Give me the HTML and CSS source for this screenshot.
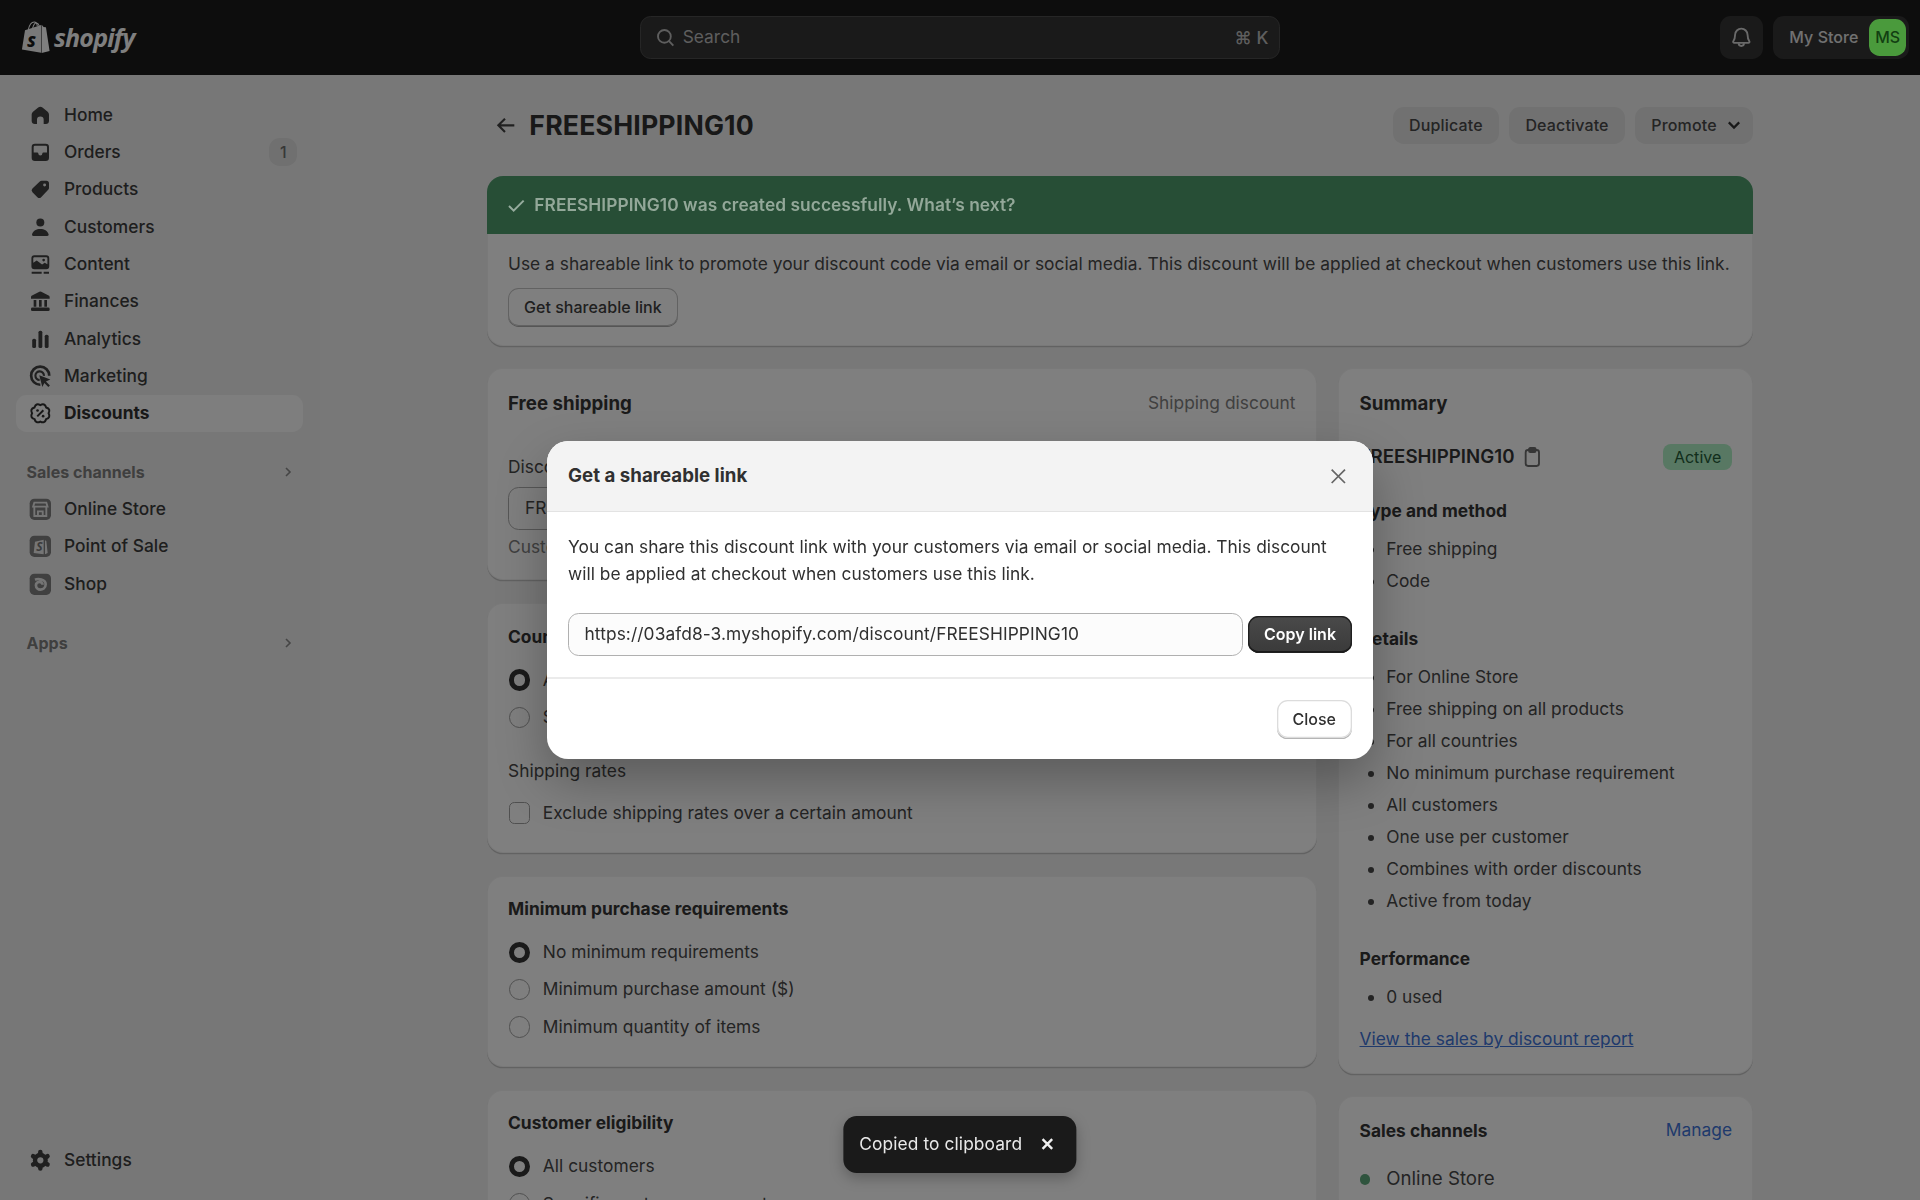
FILE: index.html
```html
<!DOCTYPE html>
<html lang="en">
<head>
<meta charset="utf-8">
<title>FREESHIPPING10 · Discounts</title>
<link rel="stylesheet" href="styles.css">
</head>
<body>
<header class="topbar">
  <div class="brand">
    <svg class="bag" viewBox="0 0 110 125" aria-hidden="true">
      <path class="bag-handle" d="M27 34C31 16 40 4 50 4c7 0 11 6 12 16M44 28C47 16 53 8 58 7c6 1 10 6 12 13"/>
      <path class="bag-left" d="M14 36 77 16v108L2 111Z"/>
      <path class="bag-right" d="M79 15c4 4 7 8 7 8l9 1c1 0 1 1 1 1l14 92-31 8Z"/>
      <text class="bag-s" x="22" y="100">S</text>
    </svg>
    <span class="wordmark">shopify</span>
  </div>
  <div class="search">
    <svg class="search-icon" viewBox="0 0 20 20"><circle cx="9.300" cy="9.300" r="4.800"/><path d="m12.800 12.800 3.200 3.400"/></svg>
    <span class="search-label">Search</span>
    <span class="search-key">⌘ K</span>
  </div>
  <div class="top-actions">
    <button class="bell"><svg viewBox="0 0 20 20"><path d="M10 3.500a4.700 4.700 0 0 0-4.700 4.700c0 2.400-.6 3.700-1.300 4.700-.4.600 0 1.300.7 1.300h10.600c.7 0 1.100-.7.7-1.300-.7-1-1.300-2.300-1.300-4.700A4.700 4.700 0 0 0 10 3.500Z"/><path d="M8 14.500a2 2 0 0 0 4 0"/></svg></button>
    <div class="store"><span>My Store</span><span class="avatar">MS</span></div>
  </div>
</header>

<div class="frame">
  <nav class="sidebar">
    <ul class="nav-list">
      <li class="nav-item"><svg class="nav-icon" viewBox="0 0 20 20"><path d="M10 3.500c-.6 0-1.100.2-1.600.6L4.500 7.400c-.7.600-1 1.400-1 2.300v4.500c0 1.300 1 2.300 2.300 2.300H7.500v-3.200a2.500 2.500 0 0 1 5 0v3.200h1.700c1.300 0 2.300-1 2.300-2.300V9.700c0-.9-.3-1.700-1-2.300l-3.900-3.300c-.5-.4-1-.6-1.600-.6Z"/></svg>Home</li>
      <li class="nav-item"><svg class="nav-icon" viewBox="0 0 20 20"><path fill-rule="evenodd" d="M3.500 6A2.500 2.500 0 0 1 6 3.500h8A2.500 2.500 0 0 1 16.500 6v8a2.500 2.500 0 0 1-2.500 2.500H6A2.500 2.500 0 0 1 3.500 14ZM5 6a1 1 0 0 1 1-1h8a1 1 0 0 1 1 1v4.200h-2.700a.8.8 0 0 0-.8.7 1.500 1.500 0 0 1-3 0 .8.8 0 0 0-.8-.7H5Z"/></svg>Orders<span class="nav-badge">1</span></li>
      <li class="nav-item"><svg class="nav-icon" viewBox="0 0 20 20"><path fill-rule="evenodd" d="M11 3.500h3.500a2 2 0 0 1 2 2V9a2 2 0 0 1-.6 1.400l-5.300 5.500a2 2 0 0 1-2.800 0l-3.700-3.700a2 2 0 0 1 0-2.800l5.500-5.300A2 2 0 0 1 11 3.500Zm2.200 2.200a1.100 1.100 0 1 0 0 2.200 1.100 1.100 0 0 0 0-2.200Z"/></svg>Products</li>
      <li class="nav-item"><svg class="nav-icon" viewBox="0 0 20 20"><circle cx="10" cy="6.300" r="3"/><path d="M3.800 15.200c.8-2.600 3.200-4 6.200-4s5.400 1.400 6.200 4c.2.700-.3 1.300-1 1.300H4.800c-.7 0-1.200-.6-1-1.300Z"/></svg>Customers</li>
      <li class="nav-item"><svg class="nav-icon" viewBox="0 0 20 20"><path fill-rule="evenodd" d="M5.500 3.200h9a2.200 2.200 0 0 1 2.200 2.200v6a2.200 2.200 0 0 1-2.200 2.200h-9a2.200 2.200 0 0 1-2.200-2.200v-6a2.200 2.200 0 0 1 2.200-2.200Zm0 1.400a.8.8 0 0 0-.8.800v3.500l2.600-1.800 4 3 2-1.200 2 1V5.400a.8.800 0 0 0-.8-.8Zm7 1.200a1 1 0 1 0 0 2 1 1 0 0 0 0-2Z"/><path d="M3.500 15.500h7.500V17H3.500ZM12.500 15.500h4V17h-4Z"/></svg>Content</li>
      <li class="nav-item"><svg class="nav-icon" viewBox="0 0 20 20"><path d="M9.300 2.800a1.500 1.500 0 0 1 1.400 0l5.500 2.900c.6.300.8.700.8 1.200V8H3V6.900c0-.5.200-.9.800-1.200Z"/><path d="M5 9h2v5H5ZM9 9h2v5H9ZM13 9h2v5h-2Z"/><rect x="3" y="14.700" width="14" height="2.600" rx="1"/></svg>Finances</li>
      <li class="nav-item"><svg class="nav-icon" viewBox="0 0 20 20"><rect x="3.900" y="9.500" width="2.900" height="7" rx="1.200"/><rect x="8.600" y="3.500" width="2.900" height="13" rx="1.200"/><rect x="13.300" y="6.500" width="2.900" height="10" rx="1.200"/></svg>Analytics</li>
      <li class="nav-item"><svg class="nav-icon" viewBox="0 0 20 20"><path class="ring" d="M10 16.300A6.800 6.800 0 1 1 16.700 9.500"/><path class="ring thin" d="M9.500 12.700a3.200 3.200 0 1 1 3.200-3"/><path d="m9.200 9.200 8.300 3.100-3.300 1.500 3 3-1.200 1.200-3-3-1.500 3.100Z"/></svg>Marketing</li>
      <li class="nav-item is-active"><svg class="nav-icon outline" viewBox="0 0 20 20"><path d="M16.200 10Q17.950 13.290 14.380 14.380 13.290 17.950 10 16.200 6.710 17.950 5.620 14.380 2.050 13.290 3.800 10 2.050 6.710 5.620 5.620 6.710 2.050 10 3.800 13.290 2.050 14.380 5.620 17.950 6.710 16.200 10Z"/><path d="m7.700 12.300 4.600-4.600"/><circle class="dot" cx="7.900" cy="7.900" r="1"/><circle class="dot" cx="12.100" cy="12.100" r="1"/></svg>Discounts</li>
    </ul>
    <div class="nav-heading">Sales channels<svg class="chev" viewBox="0 0 20 20"><path d="m8 6 4 4-4 4"/></svg></div>
    <ul class="nav-list">
      <li class="nav-item"><svg class="nav-icon" viewBox="0 0 20 20"><rect class="tile" x="2" y="2" width="16" height="16" rx="3.500"/><path class="glyph" d="M5.500 5h9l.9 3H4.600ZM5.500 8v7h9V8M8.200 15v-3.500h3.600V15"/></svg>Online Store</li>
      <li class="nav-item"><svg class="nav-icon" viewBox="0 0 20 20"><rect class="tile" x="2" y="2" width="16" height="16" rx="3.500"/><path class="glyph-fill" d="M6 6.500 12.500 5v11L5 15ZM13.500 5.500l1 .5 1 9-2 1Z"/><text class="tile-s" x="7" y="13.500">S</text></svg>Point of Sale</li>
      <li class="nav-item"><svg class="nav-icon" viewBox="0 0 20 20"><rect class="tile" x="2" y="2" width="16" height="16" rx="3.500"/><path class="swirl" d="M6 6.500C8 5.600 14 5.800 14 10c0 3-2.500 4-4 4s-3.300-1.300-3.300-3.300c0-1.600 1.300-2.500 2.700-2.500 1.300 0 2.300 1 2.300 2.200"/></svg>Shop</li>
    </ul>
    <div class="nav-heading nav-heading-apps">Apps<svg class="chev" viewBox="0 0 20 20"><path d="m8 6 4 4-4 4"/></svg></div>
    <div class="nav-foot">
      <div class="nav-item"><svg class="nav-icon gear" viewBox="0 0 20 20"><circle class="gear-ring" cx="10" cy="10" r="4"/><path class="gear-teeth" d="M10 3.800v1.500M10 14.700v1.500M4.600 6.900l1.300.8M14.100 12.300l1.300.8M4.600 13.100l1.300-.8M14.100 7.700l1.300-.8"/></svg>Settings</div>
    </div>
  </nav>

  <main class="page">
    <div class="page-head">
      <svg class="back" viewBox="0 0 20 20"><path d="M16 10H4.500M9 5l-5 5 5 5"/></svg>
      <h1 class="page-title">FREESHIPPING10</h1>
      <div class="page-actions">
        <button class="btn-soft">Duplicate</button>
        <button class="btn-soft">Deactivate</button>
        <button class="btn-soft btn-menu">Promote<svg class="caret" viewBox="0 0 20 20"><path d="m6 8 4 4 4-4"/></svg></button>
      </div>
    </div>

    <section class="card banner">
      <div class="banner-head">
        <svg class="banner-check" viewBox="0 0 20 20"><path d="m4.500 10.500 3.500 3.500L15.500 6.500"/></svg>
        <span class="banner-title">FREESHIPPING10 was created successfully. What’s next?</span>
      </div>
      <div class="banner-body">
        <p class="text">Use a shareable link to promote your discount code via email or social media. This discount will be applied at checkout when customers use this link.</p>
        <button class="btn-outline">Get shareable link</button>
      </div>
    </section>

    <div class="columns">
      <div class="col col-main">
        <section class="card card-pad">
          <div class="card-head"><h2 class="card-title card-title-lg">Free shipping</h2><span class="muted">Shipping discount</span></div>
          <div class="field-label">Discount code</div>
          <div class="field">FREESHIPPING10</div>
          <div class="muted help">Customers must enter this code at checkout.</div>
        </section>
        <section class="card card-pad">
          <h2 class="card-title">Countries</h2>
          <div class="options">
            <div class="option"><span class="radio is-on"></span>All countries</div>
            <div class="option"><span class="radio"></span>Specific countries</div>
          </div>
          <div class="sub-label">Shipping rates</div>
          <div class="option option-check"><span class="check"></span>Exclude shipping rates over a certain amount</div>
        </section>
        <section class="card card-pad">
          <h2 class="card-title">Minimum purchase requirements</h2>
          <div class="options">
            <div class="option"><span class="radio is-on"></span>No minimum requirements</div>
            <div class="option"><span class="radio"></span>Minimum purchase amount ($)</div>
            <div class="option"><span class="radio"></span>Minimum quantity of items</div>
          </div>
        </section>
        <section class="card card-pad">
          <h2 class="card-title">Customer eligibility</h2>
          <div class="options">
            <div class="option"><span class="radio is-on"></span>All customers</div>
            <div class="option"><span class="radio"></span>Specific customer segments</div>
            <div class="option"><span class="radio"></span>Specific customers</div>
          </div>
        </section>
      </div>
      <aside class="col col-side">
        <section class="card card-pad">
          <h2 class="card-title card-title-lg">Summary</h2>
          <div class="code-row">
            <span class="code">FREESHIPPING10</span>
            <svg class="clip" viewBox="0 0 20 20"><rect x="5" y="4.500" width="10" height="12" rx="1.800"/><rect x="7.500" y="3" width="5" height="3" rx="1"/></svg>
            <span class="status">Active</span>
          </div>
          <h3 class="sum-title">Type and method</h3>
          <ul class="bullets"><li>Free shipping</li><li>Code</li></ul>
          <h3 class="sum-title">Details</h3>
          <ul class="bullets">
            <li>For Online Store</li><li>Free shipping on all products</li><li>For all countries</li><li>No minimum purchase requirement</li><li>All customers</li><li>One use per customer</li><li>Combines with order discounts</li><li>Active from today</li>
          </ul>
          <h3 class="sum-title">Performance</h3>
          <ul class="bullets"><li>0 used</li></ul>
          <a class="link report" href="#">View the sales by discount report</a>
        </section>
        <section class="card card-pad">
          <div class="card-head"><h2 class="card-title">Sales channels</h2><a class="link-plain" href="#">Manage</a></div>
          <div class="channel"><span class="channel-dot"></span>Online Store</div>
        </section>
      </aside>
    </div>
  </main>
</div>

<div class="scrim"></div>

<div class="modal-wrap">
  <div class="modal" role="dialog">
    <div class="modal-head">
      <h2 class="modal-title">Get a shareable link</h2>
      <svg class="modal-x" viewBox="0 0 20 20"><path d="m5 5 10 10M15 5 5 15"/></svg>
    </div>
    <div class="modal-body">
      <p class="modal-text">You can share this discount link with your customers via email or social media. This discount will be applied at checkout when customers use this link.</p>
      <div class="link-row">
        <div class="link-field">https://03afd8-3.myshopify.com/discount/FREESHIPPING10</div>
        <button class="btn-dark">Copy link</button>
      </div>
    </div>
    <div class="modal-foot"><button class="btn-white">Close</button></div>
  </div>
</div>

<div class="toast">
  <span>Copied to clipboard</span>
  <svg class="toast-x" viewBox="0 0 20 20"><path d="m6 6 8 8M14 6l-8 8"/></svg>
</div>
</body>
</html>
```
FILE: styles.css
```css
* { box-sizing: border-box; }
html, body { margin: 0; height: 100%; }
body {
  height: 1200px;
  overflow: hidden;
  background: #f1f1f1;
  color: #484848;
  font: 400 17.33px/26.67px Inter, "Liberation Sans", sans-serif;
  letter-spacing: .03px;
  display: flex;
  flex-direction: column;
}
h1, h2, h3, p, ul { margin: 0; padding: 0; }
button { font: inherit; letter-spacing: inherit; border: 0; padding: 0; background: none; color: inherit; }
svg { display: block; flex: none; }

/* top bar */
.topbar {
  flex: none;
  height: 74.67px;
  background: #1a1a1a;
  display: grid;
  grid-template-columns: 1fr 640px 1fr;
  align-items: center;
}
.brand { display: flex; align-items: center; padding-left: 21px; gap: 4px; }
.bag { width: 29px; height: 32px; }
.bag-left { fill: #fff; opacity: .95; }
.bag-right { fill: #fff; }
.bag-handle { fill: none; stroke: #fff; stroke-width: 4; }
.bag-s { fill: #1a1a1a; font: italic 800 62px "Open Sans", sans-serif; }
.wordmark { color: #fff; font: italic 700 25px/32px "Open Sans", sans-serif; letter-spacing: -.8px; }
.search {
  height: 42.67px;
  display: flex;
  align-items: center;
  padding: 0 10.67px 0 11px;
  background: #343434;
  border: 1.33px solid #4c4c4c;
  border-radius: 10.67px;
  color: #bcbcbc;
}
.search-icon { width: 26.67px; height: 26.67px; fill: none; stroke: currentColor; stroke-width: 1.4; margin-right: 4px; }
.search-label { flex: 1; font-size: 17.33px; }
.search-key { font: 450 17.33px Inter, "DejaVu Sans", sans-serif; }
.top-actions { display: flex; justify-content: flex-end; gap: 10.67px; padding-right: 11px; }
.bell {
  width: 42.67px; height: 42.67px;
  display: flex; align-items: center; justify-content: center;
  background: #343434; border-radius: 10.67px;
}
.bell svg { width: 26.67px; height: 26.67px; fill: none; stroke: #d4d4d4; stroke-width: 1.4; }
.store {
  height: 42.67px;
  display: flex; align-items: center; gap: 10.67px;
  padding: 0 2.67px 0 16px;
  background: #343434; border-radius: 10.67px;
  color: #e3e3e3; font: 550 16px/24px Inter, sans-serif;
}
.avatar {
  position: relative; z-index: 11;
  width: 37.33px; height: 37.33px;
  display: flex; align-items: center; justify-content: center;
  background: #4a9a3c; border-radius: 10.67px;
  color: #123f12; font-size: 16px; font-weight: 500;
}

/* frame */
.frame { flex: 1; display: flex; min-height: 0; }
.sidebar {
  flex: none; width: 320px;
  padding: 21.8px 16px 21.33px 16px;
  display: flex; flex-direction: column;
  background: #efefef;
}
.nav-list { list-style: none; }
.nav-item {
  width: 287px;
  height: 37.33px;
  display: flex; align-items: center; gap: 10.67px;
  padding: 0 10.67px;
  border-radius: 10.67px;
  color: #3c3c3c; font-weight: 500;
}
.nav-icon { width: 26.67px; height: 26.67px; fill: #404040; }
.nav-icon .ring { fill: none; stroke: #404040; stroke-width: 2; }
.nav-icon .ring.thin { stroke-width: 1.6; }
.outline { fill: none; stroke: #303030; stroke-width: 1.5; }
.outline .dot { fill: #303030; stroke: none; }
.is-active { background: #fcfcfc; color: #303030; font-weight: 650; }
.nav-badge {
  margin-left: auto; margin-right: -5px;
  width: 28px; height: 28px;
  display: flex; align-items: center; justify-content: center;
  border-radius: 10.67px;
  background: #e0e0e0; color: #707070;
  font-size: 16px; font-weight: 450;
}
.nav-heading {
  width: 287px;
  height: 37.33px;
  margin-top: 20.9px;
  padding-left: 10.5px; padding-right: 5px;
  display: flex; align-items: center; justify-content: space-between;
  color: #7e7e7e; font: 650 16px/24px Inter, sans-serif;
}
.nav-heading-apps { margin-top: 21.33px; }
.chev { width: 20px; height: 20px; fill: none; stroke: #8a8a8a; stroke-width: 1.6; }
.tile { fill: #808080; }
.glyph { fill: none; stroke: #ebebeb; stroke-width: 1.4; }
.glyph-fill { fill: #ebebeb; }
.tile-s { fill: #777; font: italic 700 9px "Open Sans", sans-serif; }
.swirl { fill: none; stroke: #ebebeb; stroke-width: 2; }
.nav-foot { margin-top: auto; }
.gear-ring { fill: none; stroke: #404040; stroke-width: 3.300; }
.gear-teeth { fill: none; stroke: #404040; stroke-width: 3.400; stroke-linecap: round; }

/* page */
.page {
  flex: 1; min-width: 0;
  padding: 32px 166.67px 0;
}
.page-head { height: 37.33px; display: flex; align-items: center; margin-bottom: 32px; }
.back { width: 26.67px; height: 26.67px; fill: none; stroke: #404040; stroke-width: 1.600; margin: 0 10px 0 6px; }
.page-title { font: 700 26.67px/37.33px Inter, sans-serif; color: #303030; letter-spacing: .17px; }
.page-actions { margin-left: auto; display: flex; gap: 10.67px; }
.btn-soft {
  height: 37.33px; padding: 0 16px;
  display: flex; align-items: center; gap: 5px;
  background: #e3e3e3; border-radius: 10.67px;
  color: #484848; font: 550 16px/24px Inter, sans-serif; letter-spacing: .15px;
}
.btn-menu { gap: 3.8px; padding-right: 6.8px; }
.caret { width: 26px; height: 26px; fill: none; stroke: #303030; stroke-width: 1.700; }

.card {
  background: #fff;
  border-radius: 16px;
  box-shadow: 0 1.33px 0 rgba(26,26,26,.2), inset 0 0 0 1px rgba(0,0,0,.05);
}
.banner { overflow: hidden; }
.banner-head {
  height: 58px;
  display: flex; align-items: center; gap: 5px;
  padding: 0 21.33px 0 16px;
  background: #4f9d6d;
}
.banner-check { width: 26.67px; height: 26.67px; fill: none; stroke: #96ac9e; stroke-width: 1.500; position: relative; z-index: 11; }
.banner-title { color: #93a899; font-weight: 600; letter-spacing: .06px; position: relative; z-index: 11; }
.banner-body { padding: 17px 21.33px 20px; }
.text { white-space: nowrap; }
.btn-outline {
  display: block;
  margin-top: 10.67px;
  height: 37.33px; padding: 0 16px;
  background: #fff;
  border-radius: 10.67px;
  box-shadow: inset 0 0 0 1px #c4c4c4, 0 1px 0 #aaa;
  color: #3e3e3e; font: 550 16px/24px Inter, sans-serif;
}

.columns { display: flex; gap: 21.33px; margin-top: 22.67px; align-items: flex-start; }
.col { display: flex; flex-direction: column; gap: 23px; min-width: 0; }
.col-main { flex: 2; }
.col-side { flex: 1; gap: 22px; }
.card-pad { padding: 21.33px; }
.card-head { display: flex; justify-content: space-between; align-items: center; }
.card-title { font: 650 17.33px/24px Inter, sans-serif; color: #343434; }
.card-title-lg { font-size: 18.67px; line-height: 28px; }
.muted { color: #808080; }
.field-label { margin-top: 36.3px; }
.field {
  height: 42.67px; margin-top: 6.67px;
  display: flex; align-items: center;
  padding-left: 16px;
  border: 1.33px solid #aeaeae; border-radius: 10.67px;
}
.help { margin: 4px 0 -1.46px; }
.options { margin-top: 12.5px; }
.option { height: 37.33px; display: flex; align-items: center; gap: 12.5px; white-space: nowrap; }
.radio, .check {
  flex: none;
  width: 21.33px; height: 21.33px;
  margin-left: 1px;
  border: 1.33px solid #a0a0a0;
  border-radius: 50%;
}
.radio.is-on { border: 5.67px solid #343434; }
.check { border-radius: 5.33px; }
.sub-label { margin-top: 21.67px; }
.option-check { margin-top: 10px; }

.code-row { display: flex; align-items: center; margin: 26px 0 -1.33px; height: 26.67px; }
.code { font-size: 18.67px; font-weight: 600; color: #343434; }
.clip { width: 26.67px; height: 26.67px; margin-left: 5px; fill: none; stroke: #6c6c6c; stroke-width: 1.400; }
.status {
  margin-left: auto;
  height: 26.67px; padding: 0 10.67px;
  display: flex; align-items: center;
  border-radius: 8px;
  background: #b0f0c6; color: #245c38;
  font-size: 16px;
}
.sum-title { margin-top: 30.5px; font: 650 17.33px/24px Inter, sans-serif; color: #343434; }
.bullets { margin-top: 9.5px; padding-left: 26.67px; }
.bullets li { height: 32px; line-height: 32px; }
.link { display: inline-block; color: #3f74d8; text-decoration: underline; margin-top: 13px; }
.link-plain { color: #3f74d8; text-decoration: none; }
.channel { display: flex; align-items: center; gap: 16px; margin-top: 22px; font-size: 18.67px; }
.channel-dot { width: 10.67px; height: 10.67px; border-radius: 50%; background: #5fa87c; }

/* overlay */
.scrim { position: fixed; inset: 0; z-index: 10; background: rgba(0,0,0,.5); }
.modal-wrap {
  position: fixed; inset: 0; z-index: 20;
  display: flex; align-items: center; justify-content: center;
}
.modal {
  width: 826.67px;
  background: #fff;
  border-radius: 21.33px;
  overflow: hidden;
  box-shadow: 0 22px 50px rgba(0,0,0,.28);
  color: #303030;
}
.modal-head {
  height: 70.67px;
  display: flex; align-items: center; justify-content: space-between;
  padding: 1px 21.33px 0;
  background: #f3f3f3;
  border-bottom: 1.33px solid #e3e3e3;
}
.modal-title { font: 650 18.67px/26.67px Inter, sans-serif; }
.modal-x { width: 26.67px; height: 26.67px; fill: none; stroke: #666; stroke-width: 1.300; }
.modal-body { padding: 22.33px 21.33px 21.33px; border-bottom: 2px solid #ebebeb; }
.link-row { display: flex; align-items: center; gap: 5.33px; margin-top: 25.67px; }
.link-field {
  flex: 1; height: 42.67px;
  display: flex; align-items: center;
  padding-left: 15.5px;
  background: #fcfcfc;
  border: 1.33px solid #b0b0b0; border-radius: 10.67px;
  letter-spacing: .09px;
}
.btn-dark {
  height: 37.33px; padding: 0 16px;
  background: linear-gradient(#4a4a4a, #3a3a3a);
  border-radius: 10.67px;
  box-shadow: inset 0 0 0 1.33px #1f1f1f, inset 0 -2px 0 #1a1a1a;
  color: #fff; font: 600 16px/24px Inter, sans-serif; letter-spacing: 0;
}
.modal-foot { display: flex; justify-content: flex-end; padding: 21.33px; }
.btn-white {
  height: 37.33px; padding: 0 16px;
  background: #fff; border-radius: 10.67px;
  box-shadow: inset 0 0 0 1.33px #dcdcdc, 0 1.33px 0 #b5b5b5;
  color: #303030; font: 550 16px/24px Inter, sans-serif; letter-spacing: 0;
}
.toast {
  position: fixed; z-index: 30;
  left: 50%; bottom: 27px; transform: translateX(-50%);
  height: 57.33px; padding: 0 17.5px 0 16px;
  display: flex; align-items: center; gap: 13px;
  background: #1a1a1a; border-radius: 13.33px;
  box-shadow: 0 5px 14px rgba(0,0,0,.25);
  color: #e9e9e9; white-space: nowrap; letter-spacing: .1px;
}
.toast-x { width: 24px; height: 24px; fill: none; stroke: #f0f0f0; stroke-width: 2; }
```
